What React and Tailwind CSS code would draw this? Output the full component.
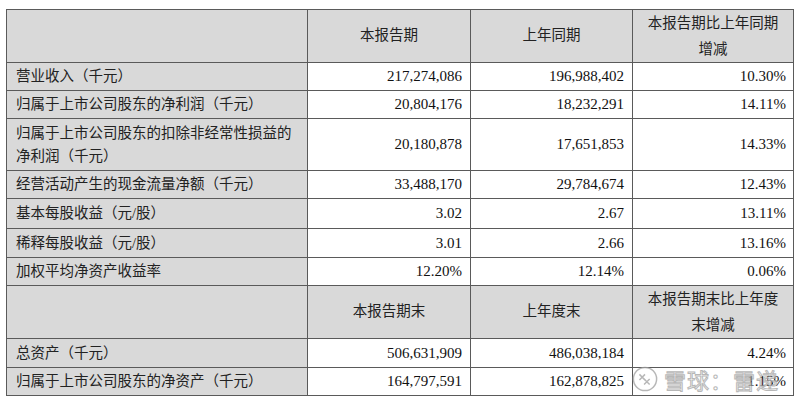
const rows1 = [
  { label: ['营业收入（千元）'], a: '217,274,086', b: '196,988,402', c: '10.30%', h: 'h-[28px]' },
  { label: ['归属于上市公司股东的净利润（千元）'], a: '20,804,176', b: '18,232,291', c: '14.11%', h: 'h-[28px]' },
  { label: ['归属于上市公司股东的扣除非经常性损益的', '净利润（千元）'], a: '20,180,878', b: '17,651,853', c: '14.33%', h: 'h-[52px]' },
  { label: ['经营活动产生的现金流量净额（千元）'], a: '33,488,170', b: '29,784,674', c: '12.43%', h: 'h-[28px]' },
  { label: ['基本每股收益（元/股）'], a: '3.02', b: '2.67', c: '13.11%', h: 'h-[30px]' },
  { label: ['稀释每股收益（元/股）'], a: '3.01', b: '2.66', c: '13.16%', h: 'h-[29px]' },
  { label: ['加权平均净资产收益率'], a: '12.20%', b: '12.14%', c: '0.06%', h: 'h-[28px]' },
];

const rows2 = [
  { label: ['总资产（千元）'], a: '506,631,909', b: '486,038,184', c: '4.24%', h: 'h-[29px]' },
  { label: ['归属于上市公司股东的净资产（千元）'], a: '164,797,591', b: '162,878,825', c: '1.15%', h: 'h-[28px]' },
];

const cell = 'border border-[#5a5a5a] p-0';
const serif = 'font-["Liberation_Serif","Noto_Sans_CJK_SC",serif]';

function HeaderRow({ a, b, c }) {
  return (
    <tr className="h-[52px] bg-[#d9d9d9] text-[#222]">
      <td className={cell}></td>
      <td className={`${cell} text-center text-[14.5px]`}>{a}</td>
      <td className={`${cell} text-center text-[14.5px]`}>{b}</td>
      <td className={`${cell} text-center text-[14.5px] leading-[26px]`}>
        {c.map((l, i) => (
          <div key={i}>{l}</div>
        ))}
      </td>
    </tr>
  );
}

function DataRow({ r }) {
  return (
    <tr className={r.h}>
      <td className={`${cell} bg-[#d9d9d9] pl-[9px] text-[14.5px] leading-[23px] text-[#222]`}>
        {r.label.map((l, i) => (
          <div key={i}>{l}</div>
        ))}
      </td>
      <td className={`${cell} bg-white pr-[8px] text-right text-[15px] text-[#111]`}>{r.a}</td>
      <td className={`${cell} bg-white pr-[8px] text-right text-[15px] text-[#111]`}>{r.b}</td>
      <td className={`${cell} bg-white pr-[7px] text-right text-[15px] text-[#111]`}>{r.c}</td>
    </tr>
  );
}

export default function App() {
  return (
    <div className={`relative w-[800px] h-[406px] bg-white overflow-hidden ${serif}`}>
      <table className="ml-[6px] mt-[9px] w-[787px] table-fixed border-collapse">
        <colgroup>
          <col className="w-[301px]" />
          <col className="w-[163px]" />
          <col className="w-[162px]" />
          <col className="w-[161px]" />
        </colgroup>
        <tbody>
          <HeaderRow a="本报告期" b="上年同期" c={['本报告期比上年同期', '增减']} />
          {rows1.map((r, i) => (
            <DataRow key={i} r={r} />
          ))}
          <HeaderRow a="本报告期末" b="上年度末" c={['本报告期末比上年度', '末增减']} />
          {rows2.map((r, i) => (
            <DataRow key={i} r={r} />
          ))}
        </tbody>
      </table>

      {/* watermark */}
      <div className="absolute left-[632px] top-[366px] flex items-center gap-[6px] opacity-75 pointer-events-none">
        <svg width="26" height="26" viewBox="0 0 28 28" fill="none" stroke="#a0a0a0" strokeWidth="1.6">
          <circle cx="14" cy="14" r="12.5" fill="rgba(255,255,255,0.6)" />
          <path d="M8 9 L14 15 M14 9 L8 15" />
          <path d="M13 14 L19 20 M19 14 L13 20" />
        </svg>
        <span className='text-[22px] leading-none tracking-[1px] text-white/70 font-["Noto_Sans_CJK_SC",sans-serif] [-webkit-text-stroke:1px_#a0a0a0]'>
          雪球：雷递
        </span>
      </div>
    </div>
  );
}
